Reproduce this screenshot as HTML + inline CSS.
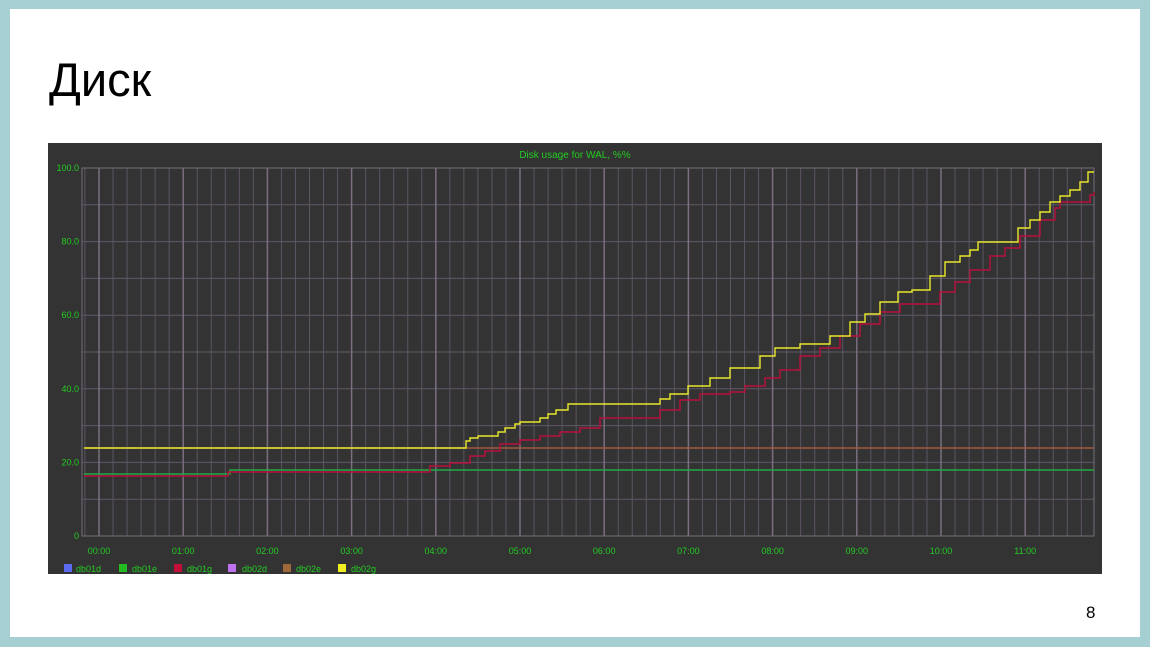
<!DOCTYPE html>
<html><head><meta charset="utf-8"><style>
body{margin:0;width:1150px;height:647px;background:#a6cfd4;position:relative;overflow:hidden;font-family:"Liberation Sans","DejaVu Sans",sans-serif}
#w{position:absolute;left:10px;top:9px;width:1130px;height:628px;background:#fff}
h1{position:absolute;left:49px;top:52px;margin:0;font-weight:normal;font-size:47px;color:#000;letter-spacing:0px}
#pg{position:absolute;left:1086px;top:603px;font-size:17px;color:#000}
svg{position:absolute;left:48px;top:143px}
</style></head><body>
<div id="w"></div>
<h1>Диск</h1>
<div id="pg">8</div>
<svg id="c" width="1054" height="431" viewBox="48 143 1054 431" font-family="Liberation Sans, DejaVu Sans, sans-serif">
<rect x="48" y="143" width="1054" height="431" fill="#333"/>
<text x="575" y="158" fill="#22cc22" font-size="10" text-anchor="middle">Disk usage for WAL, %%</text>
<g id="grid"></g>
<g id="lab" fill="#22cc22" font-size="9"></g>
<g id="lines" fill="none" stroke-width="1.4"></g>
<g font-size="9" fill="#22cc22">
<rect x="64" y="564" width="8" height="8" fill="#5b6af0"/><text x="76" y="572">db01d</text>
<rect x="119" y="564" width="8" height="8" fill="#22bb22"/><text x="132" y="572">db01e</text>
<rect x="174" y="564" width="8" height="8" fill="#c0103a"/><text x="187" y="572">db01g</text>
<rect x="228" y="564" width="8" height="8" fill="#c070f0"/><text x="242" y="572">db02d</text>
<rect x="283" y="564" width="8" height="8" fill="#a06838"/><text x="296" y="572">db02e</text>
<rect x="338" y="564" width="8" height="8" fill="#f0f020"/><text x="351" y="572">db02g</text>
</g>
</svg>
<script>
var ns="http://www.w3.org/2000/svg",g=document.getElementById('grid'),lab=document.getElementById('lab'),L=document.getElementById('lines');
function el(p,t,a,txt){var e=document.createElementNS(ns,t);for(var k in a)e.setAttribute(k,a[k]);if(txt)e.textContent=txt;p.appendChild(e);return e;}
var x0=82,x1=1094,y0=168,y1=536;
for(var v=0;v<=100;v+=10){var y=y1-v*3.68;el(g,'line',{x1:x0,x2:x1,y1:y,y2:y,stroke:'#615868','stroke-width':1});
 if(v%20==0)el(lab,'text',{x:79,y:y+3,'text-anchor':'end'},v==0?'0':v.toFixed(1));}
for(var i=-1;i<72;i++){var x=99+i*84.2/6;if(x<x0||x>x1)continue;var maj=(i%6==0);
 el(g,'line',{x1:x,x2:x,y1:y0,y2:y1,stroke:maj?'#7a6e80':'#5c5462','stroke-width':maj?1.5:1});
 if(maj)el(lab,'text',{x:x,y:554,'text-anchor':'middle'},(i/6<10?'0':'')+(i/6)+':00');}
el(g,'rect',{x:x0,y:y0,width:x1-x0,height:y1-y0,fill:'none',stroke:'#766c7c'});
function step(pts,c){var d='M'+pts[0][0]+' '+pts[0][1];for(var i=1;i<pts.length;i++){d+=' H'+pts[i][0]+' V'+pts[i][1];}el(L,'path',{d:d,stroke:c});}
step([[84,448],[1094,448]],'#a05a40');
step([[84,474],[227,474],[230,470],[1094,470]],'#22aa44');
step([[84,476],[225,476],[228,472],[425,472],[430,466],[450,463],[470,456],[485,451],[500,444],[520,440],[540,436],[560,432],[580,428],[600,418],[640,418],[660,410],[680,400],[700,394],[730,392],[745,386],[765,378],[780,370],[800,356],[820,348],[840,336],[860,324],[880,312],[900,304],[930,304],[940,292],[955,282],[970,270],[990,256],[1005,248],[1020,236],[1040,220],[1055,208],[1060,202],[1085,202],[1090,195],[1094,192]],'#b8103c');
step([[84,448],[462,448],[466,441],[470,438],[478,436],[498,432],[505,428],[515,424],[520,422],[540,418],[548,414],[556,410],[568,404],[650,404],[660,399],[670,394],[688,386],[710,378],[730,368],[760,356],[775,348],[800,344],[830,336],[850,322],[865,314],[880,302],[898,292],[912,290],[930,276],[945,262],[960,256],[970,250],[978,242],[1005,242],[1018,228],[1030,220],[1040,212],[1050,202],[1060,196],[1070,190],[1080,182],[1088,172],[1094,172]],'#e8e82a');
</script>
</body></html>
